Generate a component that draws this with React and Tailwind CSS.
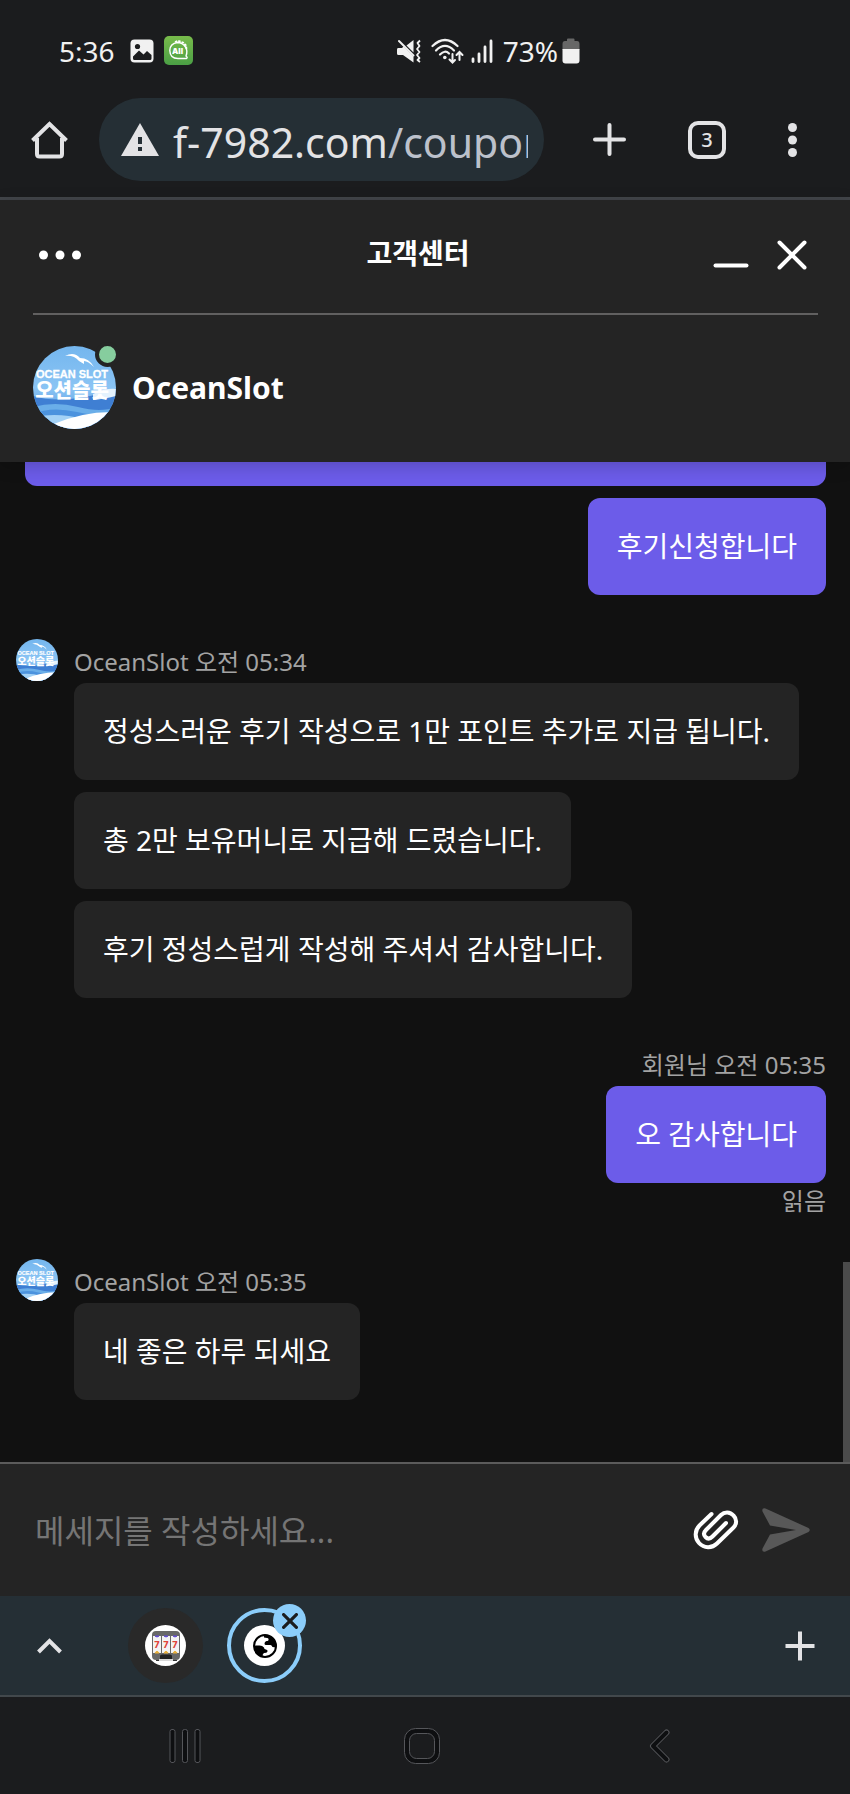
import React, { useState } from "react";

const mensajes = [
  { id: 1, propio: true, textos: ["후기신청합니다"] },
  {
    id: 2,
    autor: "OceanSlot",
    hora: "오전 05:34",
    textos: [
      "정성스러운 후기 작성으로 1만 포인트 추가로 지급 됩니다.",
      "총 2만 보유머니로 지급해 드렸습니다.",
      "후기 정성스럽게 작성해 주셔서 감사합니다.",
    ],
  },
  {
    id: 3,
    propio: true,
    autor: "회원님",
    hora: "오전 05:35",
    textos: ["오 감사합니다"],
    estado: "읽음",
  },
  { id: 4, autor: "OceanSlot", hora: "오전 05:35", textos: ["네 좋은 하루 되세요"] },
];

// ==============================
// Avatar de OceanSlot
// ==============================
const Avatar = ({ id, className }) => (
  <svg viewBox="0 0 83 83" className={className} role="img" aria-label="OceanSlot">
    <defs>
      <clipPath id={`circulo-${id}`}>
        <circle cx="41.5" cy="41.5" r="41.5" />
      </clipPath>
      <linearGradient id={`cielo-${id}`} x1="0" y1="0" x2="0" y2="1">
        <stop offset="0" stopColor="#74b6ee" />
        <stop offset="0.5" stopColor="#8ac4f4" />
        <stop offset="1" stopColor="#4a8fdc" />
      </linearGradient>
    </defs>
    <g clipPath={`url(#circulo-${id})`}>
      <rect width="83" height="83" fill={`url(#cielo-${id})`} />
      <path d="M0 50 Q20 56 45 52 T83 44 V83 H0Z" fill="#3f7fd3" />
      <path d="M60 48 Q72 42 83 43 V50 Q70 53 60 54Z" fill="#e4f2fd" />
      <path d="M0 61 Q22 55 45 61 T83 61 V83 H0Z" fill="#6aaee9" />
      <path d="M0 68 Q18 60 44 66 T83 66 V83 H0Z" fill="#4c93de" />
      <path d="M0 71 Q26 66 50 73 V83 H0Z" fill="#a4d2f6" />
      <path d="M18 79 Q50 65 83 66 V83 H18Z" fill="#fff" />
      <path
        d="M32 10 Q41 5 47 12 Q56 12 61 21 Q55 15 51 15 L51 18 L46 15 Q41 9 32 10Z"
        fill="#fff"
      />
      <text
        x="39"
        y="32"
        textAnchor="middle"
        fontSize="11"
        fontWeight="700"
        fill="#fff"
        stroke="#fff"
        strokeWidth="0.3"
        fontFamily="'Liberation Sans', sans-serif"
      >
        OCEAN SLOT
      </text>
      <text
        x="39"
        y="52"
        textAnchor="middle"
        fontSize="20"
        fontWeight="900"
        fill="#fff"
        fontFamily="'Noto Sans CJK KR', sans-serif"
      >
        오션슬롯
      </text>
    </g>
  </svg>
);

// ==============================
// Barra de estado del teléfono
// ==============================
const BarraEstado = () => (
  <div className="flex h-[98px] items-center justify-between pl-[59px] pr-[270px] pt-[3px] text-[28px] text-[#f1f1f1]">
    <div className="flex items-center">
      <span>5:36</span>
      <svg viewBox="0 0 24 24" className="ml-[15px] size-6">
        <rect x="0.5" y="0.5" width="23" height="23" rx="4" fill="#f1f1f1" />
        <circle cx="7.5" cy="7.5" r="2.6" fill="#1b1c1e" />
        <path d="M3 17.5 L9 11.5 L13.5 15.5 L17 12 L21.5 16 V19.5 Q21.5 21 20 21 H4.5 Q3 21 3 19.5Z" fill="#1b1c1e" />
      </svg>
      <svg viewBox="0 0 29 29" className="ml-[10px] size-[29px]">
        <defs>
          <linearGradient id="verde" x1="0" y1="0" x2="0" y2="1">
            <stop offset="0" stopColor="#78bb4b" />
            <stop offset="1" stopColor="#4b9f45" />
          </linearGradient>
        </defs>
        <rect width="29" height="29" rx="5" fill="url(#verde)" />
        <path
          d="M22 20 Q24 15 21.5 11 Q18.5 6.5 13.5 6.5 Q6 7.5 5.8 14.5 Q6 22.5 14 22.5 H22.5 Q24 21.5 22 20Z"
          fill="none"
          stroke="#fff"
          strokeWidth="1.4"
        />
        <path d="M11 6 L14 4.8 L19 6.5 L22 9.5 L22.5 13" fill="none" stroke="#fff" strokeWidth="1.8" strokeDasharray="2.5 1" />
        <text x="13.5" y="17.5" textAnchor="middle" fontSize="8" fontWeight="900" fill="#fff" fontFamily="Inter, sans-serif">
          All
        </text>
      </svg>
    </div>

    <div className="flex items-center">
      {/* Silencio con vibración */}
      <svg viewBox="0 0 24 24" className="size-6" fill="#f1f1f1">
        <path d="M1 9 Q0 9 0 10.5 V14.5 Q0 16 1.5 16 H6 L16.5 23.5 V17.5 L6.5 7.5 L5 9Z" />
        <path d="M9.5 6.5 L16.5 1 V13.5Z" />
        <path d="M2 2 L16.5 16.5" stroke="#f1f1f1" strokeWidth="2" strokeLinecap="round" />
        <path
          d="M23 1.5 L20.5 4 L22.5 7 L20 10 L22.5 13 L20 16 L22.5 19 L20.5 21 L23 23"
          fill="none"
          stroke="#f1f1f1"
          strokeWidth="1.8"
          strokeLinejoin="round"
        />
      </svg>
      {/* Wifi */}
      <svg viewBox="0 0 34 26" className="ml-[10px] h-[26px] w-[34px]" fill="none" stroke="#f1f1f1" strokeWidth="2.2" strokeLinecap="round">
        <path d="M1.5 8 Q14 -4 26.5 8" />
        <path d="M5 12.5 Q14 3.5 23 12.5" />
        <path d="M9 16.5 Q14 11.5 18 15.5" />
        <circle cx="13.8" cy="19.5" r="1.8" fill="#f1f1f1" stroke="none" />
        <path d="M21.5 16 V24 M18.5 21.5 L21.5 24.5 L24 22" strokeWidth="2" />
        <path d="M28.5 22 V14.5 M25.5 17 L28.5 14 L31.5 17" strokeWidth="2" />
      </svg>
      {/* Señal */}
      <svg viewBox="0 0 22 24" className="ml-[6px] h-6 w-[22px]" stroke="#f1f1f1" strokeWidth="2.8" strokeLinecap="round">
        <path d="M2 20 V22.5 M8 15 V22.5 M14 8 V22.5 M20 2 V22.5" />
      </svg>
      <span className="ml-[10px]">73%</span>
      {/* Batería */}
      <svg viewBox="0 0 18 26" className="ml-1 h-[26px] w-[18px]">
        <path d="M5 3 V1.5 Q5 0.5 6 0.5 H11.5 Q12.5 0.5 12.5 1.5 V3 H15 Q17.5 3 17.5 6 V12 H0.5 V6 Q0.5 3 3 3Z" fill="#676767" />
        <path d="M0.5 11 H17.5 V22.5 Q17.5 25.5 14.5 25.5 H3.5 Q0.5 25.5 0.5 22.5Z" fill="#f1f1f1" />
      </svg>
    </div>
  </div>
);

// ==============================
// Barra del navegador
// ==============================
const BarraNavegador = () => (
  <div className="flex items-center border-b-[3px] border-[#42454a] pb-4 pl-[31px] pr-[53px] text-[#e3e3e5]">
    <button aria-label="Inicio">
      <svg viewBox="0 0 37 38" className="h-[38px] w-[37px]" fill="none" stroke="currentColor" strokeWidth="4">
        <path d="M1.5 19.5 L18.5 3 L35.5 19.5 M6 17 V33 Q6 35.5 8.5 35.5 H28.5 Q31 35.5 31 33 V17" />
      </svg>
    </button>

    <div className="ml-[31px] flex h-[83px] min-w-0 flex-1 items-center rounded-full bg-[#252f35] pl-[22px] pr-4">
      <svg viewBox="0 0 38 33" className="h-[33px] w-[38px] shrink-0">
        <path d="M19 0 L38 33 H0Z" fill="#e3e3e5" />
        <path d="M17 14 H21 V21 H17Z M17 24 H21 V28 H17Z" fill="#252f35" />
      </svg>
      <a
        href="#coupon"
        className="ml-[14px] overflow-hidden whitespace-nowrap pt-1 text-[41px] leading-[56px] text-[#e3e3e5]"
      >
        f-7982.com<span className="text-[#bcc1cb]">/coupon</span>
      </a>
    </div>

    <div className="ml-[49px] flex items-center gap-[62px]">
      <button aria-label="Nueva pestaña">
        <svg viewBox="0 0 33 33" className="size-[33px]" stroke="currentColor" strokeWidth="4" strokeLinecap="round">
          <path d="M16.5 2 V31 M2 16.5 H31" />
        </svg>
      </button>
      <button
        aria-label="Pestañas abiertas"
        className="flex size-[38px] items-center justify-center rounded-[10px] border-4 border-current text-xl font-medium"
      >
        3
      </button>
      <button aria-label="Menú del navegador">
        <svg viewBox="0 0 9 34" className="h-[34px] w-[9px]" fill="currentColor">
          <circle cx="4.5" cy="4.5" r="4.5" />
          <circle cx="4.5" cy="17" r="4.5" />
          <circle cx="4.5" cy="29.5" r="4.5" />
        </svg>
      </button>
    </div>
  </div>
);

// ==============================
// Cabecera del chat
// ==============================
const CabeceraChat = () => (
  <header className="relative z-10 bg-[#242424] text-white shadow-[0_4px_16px_rgba(0,0,0,0.2)]">
    <div className="grid h-[113px] grid-cols-[1fr_auto_1fr] items-center pb-1 pl-[29px] pr-[43px]">
      <button aria-label="Opciones" className="justify-self-start p-[10px]">
        <svg viewBox="0 0 42 10" className="h-[10px] w-[42px]" fill="currentColor">
          <circle cx="4.5" cy="5" r="4.5" />
          <circle cx="21" cy="5" r="4.5" />
          <circle cx="37.5" cy="5" r="4.5" />
        </svg>
      </button>
      <h1 className="pb-[3px] text-[28px] font-bold">고객센터</h1>
      <div className="flex items-center gap-7 justify-self-end">
        <button aria-label="Minimizar">
          <svg viewBox="0 0 36 30" className="h-[30px] w-9" stroke="currentColor" strokeWidth="4" strokeLinecap="round">
            <path d="M2.5 25.5 H33.5" />
          </svg>
        </button>
        <button aria-label="Cerrar">
          <svg viewBox="0 0 30 30" className="size-[30px]" stroke="currentColor" strokeWidth="4" strokeLinecap="round">
            <path d="M2.5 2.5 L27.5 27.5 M27.5 2.5 L2.5 27.5" />
          </svg>
        </button>
      </div>
    </div>
    <hr className="ml-[33px] mr-8 border-t-2 border-[#616060]" />
    <div className="flex items-center px-[33px] pb-[33px] pt-[31px]">
      <div className="relative">
        <Avatar id="cabecera" className="size-[83px]" />
        <span className="absolute -right-1 -top-1 size-[25px] rounded-full border-4 border-[#242424] bg-[#86cd9e]" />
      </div>
      <h2 className="ml-4 text-[30px] font-bold">OceanSlot</h2>
    </div>
  </header>
);

const Mensaje = ({ mensaje }) => {
  const { id, propio, autor, hora, textos, estado } = mensaje;

  return (
    <li className={`flex gap-4 ${propio ? "justify-end" : ""}`}>
      {!propio && <Avatar id={id} className="size-[42px] shrink-0" />}
      <div className={`flex flex-col ${propio ? "items-end" : "items-start"}`}>
        {autor && (
          <p className="pb-[5px] pt-[7px] text-2xl leading-8 text-[#a3a3a3]">
            {autor} {hora}
          </p>
        )}
        <div className={`flex flex-col gap-3 ${propio ? "items-end" : "items-start"}`}>
          {textos.map((texto) => (
            <p
              key={texto}
              className={`rounded-xl p-[29px] text-[28px] leading-[39px] text-white ${
                propio ? "bg-[#6c5ce9]" : "bg-[#242424]"
              }`}
            >
              {texto}
            </p>
          ))}
        </div>
        {estado && (
          <p className="pt-1 text-2xl leading-7 text-[#a3a3a3]">{estado}</p>
        )}
      </div>
    </li>
  );
};

// ==============================
// Campo para escribir
// ==============================
const CampoMensaje = () => {
  const [texto, setTexto] = useState("");

  return (
    <form
      className="flex items-center border-t-2 border-[#5b5b5b] bg-[#242424] py-[41px] pl-[35px] pr-10"
      onSubmit={(e) => {
        e.preventDefault();
        setTexto("");
      }}
    >
      <input
        type="text"
        aria-label="메세지"
        placeholder="메세지를 작성하세요..."
        className="h-[50px] min-w-0 flex-1 text-[32px] text-white outline-none placeholder:text-[#757575]"
        value={texto}
        onChange={(e) => setTexto(e.target.value)}
      />
      <button type="button" aria-label="Adjuntar archivo" className="text-white">
        <svg viewBox="0 0 46 40" className="h-10 w-[46px]" fill="none" stroke="currentColor" strokeWidth="4" strokeLinecap="round" strokeLinejoin="round">
          <path d="M18.5 4 L6.5 15.5 C1.5 20.5 1.5 28 6 33 C11 38.5 19 38.5 24 33.5 L40.5 17.5 C44 14 44 9 40.5 5.5 C37 1.5 31.5 1.5 28 5 L13 20 C10.5 22.5 10.5 25 12.5 27 C14.5 29 17 29 19.5 26.5 L33 13" />
        </svg>
      </button>
      <button type="submit" aria-label="Enviar" className="ml-[23px] text-[#585858]">
        <svg viewBox="0 0 48 44" className="h-11 w-12" fill="currentColor">
          <path d="M3.5 0.5 L46.5 20 Q49 22 46.5 24 L3.5 43.5 Q-0.5 44.5 0.5 40.5 L8 26.5 L34 22 L8 17.5 L0.5 3.5 Q-0.5 -0.5 3.5 0.5Z" />
        </svg>
      </button>
    </form>
  );
};

// ==============================
// Grupo de pestañas
// ==============================
const GrupoPestanas = () => (
  <div className="flex h-[101px] items-center border-b-2 border-[#42484c] bg-[#252f35] pl-[37px] pr-[35px] text-[#e3e3e5]">
    <button aria-label="Expandir">
      <svg viewBox="0 0 25 16" className="h-4 w-[25px]" fill="none" stroke="currentColor" strokeWidth="4">
        <path d="M1.5 14 L12.5 3 L23.5 14" />
      </svg>
    </button>

    <button aria-label="Slot" className="ml-[66px] flex size-[75px] items-center justify-center rounded-full bg-[#292929]">
      <svg viewBox="0 0 41 41" className="size-[41px]">
        <circle cx="20.5" cy="20.5" r="20.5" fill="#fff" />
        <rect x="7" y="6" width="28" height="29" rx="4" fill="#686868" />
        <path d="M11 35 H15 V36 H11Z M28 35 H32 V36 H28Z" fill="#333" />
        <rect x="8" y="11" width="8" height="17" fill="#f3f3f3" />
        <rect x="17" y="11" width="8" height="17" fill="#f3f3f3" />
        <rect x="26" y="11" width="8" height="17" fill="#f3f3f3" />
        <path d="M10 11 H14 L12 12Z M19 11 H23 L21 12Z M28 11 H32 L30 12Z" fill="#604bd0" stroke="#604bd0" />
        <path d="M10 28 Q12 24.5 14 28Z M19 28 Q21 24.5 23 28Z M28 28 Q30 24.5 32 28Z" fill="#e9b13c" stroke="#e9b13c" />
        <g fill="#e0443a" fontSize="9" fontWeight="800" textAnchor="middle" fontFamily="Inter, sans-serif">
          <text x="12" y="22.5">7</text>
          <text x="21" y="22.5">7</text>
          <text x="30" y="22.5">7</text>
        </g>
        <path d="M15 34 V31 Q15 29.5 17 29.5 H25 Q27 29.5 27 31 V34Z" fill="#222" />
        <path d="M14 34 H28 V36 H14Z" fill="#d8d8d8" />
      </svg>
    </button>

    <div className="relative ml-6">
      <button aria-label="Pestaña actual" className="flex size-[75px] items-center justify-center rounded-full border-4 border-[#8bcdfa]">
        <svg viewBox="0 0 41 41" className="size-[41px]">
          <circle cx="20.5" cy="20.5" r="20.5" fill="#fff" />
          <path d="M20 10 Q29 10 31 17 Q32.5 20 32 22.5 L28.5 22 Q27.5 20 26.5 20 H22 Q20.5 20 20.5 18.5 Q20.5 16.5 22.5 16 Q25 16 24.5 14 Q24 12.5 20 12.5Z" />
          <path d="M10 20.5 H15.5 Q18.5 20.5 20 22.5 Q20 24.5 22 24.5 Q24 25 23.5 26.5 Q23 28 20 28 Q18.5 28.5 18.5 31.5 Q11 29.5 10 20.5Z" />
          <circle cx="21" cy="21" r="11" fill="none" stroke="#000" strokeWidth="2" />
        </svg>
      </button>
      <button
        aria-label="Cerrar pestaña"
        className="absolute -right-1 -top-1 flex size-[33px] items-center justify-center rounded-full bg-[#8bcdfa] text-[#1b1c1e]"
      >
        <svg viewBox="0 0 16 16" className="size-4" stroke="currentColor" strokeWidth="3.2" strokeLinecap="round">
          <path d="M1.6 1.6 L14.4 14.4 M14.4 1.6 L1.6 14.4" />
        </svg>
      </button>
    </div>

    <button aria-label="Agregar pestaña" className="ml-auto">
      <svg viewBox="0 0 30 30" className="size-[30px]" stroke="currentColor" strokeWidth="4">
        <path d="M15 0.5 V29.5 M0.5 15 H29.5" />
      </svg>
    </button>
  </div>
);

// ==============================
// Botones del sistema
// ==============================
const BotonesSistema = () => (
  <nav className="grid h-[97px] grid-cols-3 items-center justify-items-center pl-[66px] pr-[72px]">
    <button aria-label="Recientes">
      <svg viewBox="0 0 32 34" className="h-[34px] w-8" fill="#0e0f11" stroke="#55565a">
        <rect x="1" y="0.5" width="5" height="33" rx="2" />
        <rect x="13.5" y="0.5" width="5" height="33" rx="2" />
        <rect x="26" y="0.5" width="5" height="33" rx="2" />
      </svg>
    </button>
    <button aria-label="Pantalla principal">
      <svg viewBox="0 0 36 36" className="size-9" stroke="#55565a">
        <rect x="0.5" y="0.5" width="35" height="35" rx="11" fill="#0e0f11" />
        <rect x="5.5" y="5.5" width="25" height="25" rx="7" fill="#1b1c1e" />
      </svg>
    </button>
    <button aria-label="Atrás">
      <svg viewBox="0 0 21 34" className="h-[34px] w-[21px]" fill="none" strokeLinecap="round" strokeLinejoin="round">
        <path d="M17.5 3.5 L4 17 L17.5 30.5" stroke="#55565a" strokeWidth="6" />
        <path d="M17.5 3.5 L4 17 L17.5 30.5" stroke="#0e0f11" strokeWidth="4" />
      </svg>
    </button>
  </nav>
);

const App = () => {
  return (
    <div className="flex min-h-screen flex-col bg-[#1b1c1e] font-['Noto_Sans','Noto_Sans_CJK_KR',sans-serif]">
      <BarraEstado />
      <BarraNavegador />
      <CabeceraChat />

      <main className="relative flex-1 bg-[#111111] pb-[60px]">
        {/* Final del mensaje anterior */}
        <div className="ml-[25px] mr-6 h-6 rounded-b-xl bg-[#6c5ce9]" />
        <ul className="mt-3 flex flex-col gap-11 pl-4 pr-6">
          {mensajes.map((m) => (
            <Mensaje key={m.id} mensaje={m} />
          ))}
        </ul>
        {/* Barra de desplazamiento */}
        <span className="absolute bottom-0 right-0 h-1/5 w-[7px] bg-[#4b4b4b]" />
      </main>

      <CampoMensaje />
      <GrupoPestanas />
      <BotonesSistema />
    </div>
  );
};

export default App;
